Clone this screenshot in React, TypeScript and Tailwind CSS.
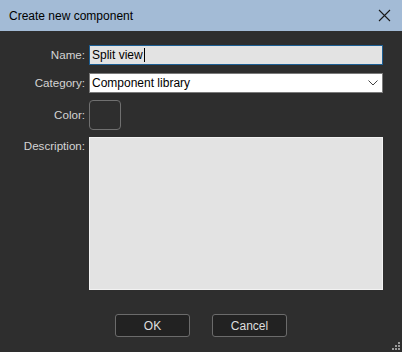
import React from "react";

export default function App() {
  const font = { fontFamily: '"Liberation Sans", Arial, sans-serif' };
  return (
    <div className="w-[402px] h-[352px] flex flex-col bg-[#2e2e2e] overflow-hidden" style={font}>
      <div className="h-[31px] shrink-0 bg-[#a3bbd6] flex items-center justify-between pl-[9px] pr-[10px]">
        <span className="text-[12px] text-black leading-none">Create new component</span>
        <svg width="13" height="13" viewBox="0 0 13 13" className="mr-px">
          <path d="M1 1 L12 12 M12 1 L1 12" stroke="#1a1a1a" strokeWidth="1.1" fill="none" />
        </svg>
      </div>
      <div className="relative flex-1 flex flex-col pt-[14px] pr-[19px]">
        <div className="grid grid-cols-[85px_1fr] gap-x-[4px]">
          <div className="h-[20px] flex items-center justify-end text-[11.6px] text-[#d4d4d4]">Name:</div>
          <div className="h-[20px] border border-[#1d5f94] bg-[#e3e3e3] flex items-center pl-[2px] text-[12px] text-black">
            <span>Split view</span>
            <span className="w-px h-[14px] bg-black ml-px" />
          </div>
          <div className="mt-[8px] h-[20px] flex items-center justify-end text-[11.6px] text-[#d4d4d4]">Category:</div>
          <div className="mt-[8px] h-[20px] border border-[#7a7a7a] bg-white flex items-center justify-between pl-[2px] pr-[4px] text-[12px] text-black">
            <span>Component library</span>
            <svg width="10" height="6" viewBox="0 0 10 6">
              <path d="M0.5 0.5 L5 5 L9.5 0.5" stroke="#444" strokeWidth="1" fill="none" />
            </svg>
          </div>
          <div className="mt-[7px] h-[30px] flex items-center justify-end text-[11.6px] text-[#d4d4d4]">Color:</div>
          <div className="mt-[7px]">
            <div className="w-[32px] h-[30px] rounded-[4px] border border-[#707070]" />
          </div>
          <div className="mt-[7px] flex justify-end text-[11.6px] text-[#d4d4d4]">Description:</div>
          <div className="mt-[7px] h-[153px] border border-[#f2f2f2] bg-[#e3e3e3]" />
        </div>
        <div className="mt-[24px] flex gap-[22px] pl-[115px]">
          <button className="w-[75px] h-[23px] rounded-[3px] border border-[#6b6b6b] bg-[#222222] text-[12px] text-[#dedede]">OK</button>
          <button className="w-[75px] h-[23px] rounded-[3px] border border-[#6b6b6b] bg-[#222222] text-[12px] text-[#dedede]">Cancel</button>
        </div>
        <svg width="8" height="8" viewBox="0 0 8 8" className="absolute right-[2px] bottom-[2px]">
          <rect x="6" y="0" width="2" height="2" fill="#9a9a9a" />
          <rect x="3" y="3" width="2" height="2" fill="#9a9a9a" />
          <rect x="6" y="3" width="2" height="2" fill="#9a9a9a" />
          <rect x="0" y="6" width="2" height="2" fill="#9a9a9a" />
          <rect x="3" y="6" width="2" height="2" fill="#9a9a9a" />
          <rect x="6" y="6" width="2" height="2" fill="#9a9a9a" />
        </svg>
      </div>
    </div>
  );
}
